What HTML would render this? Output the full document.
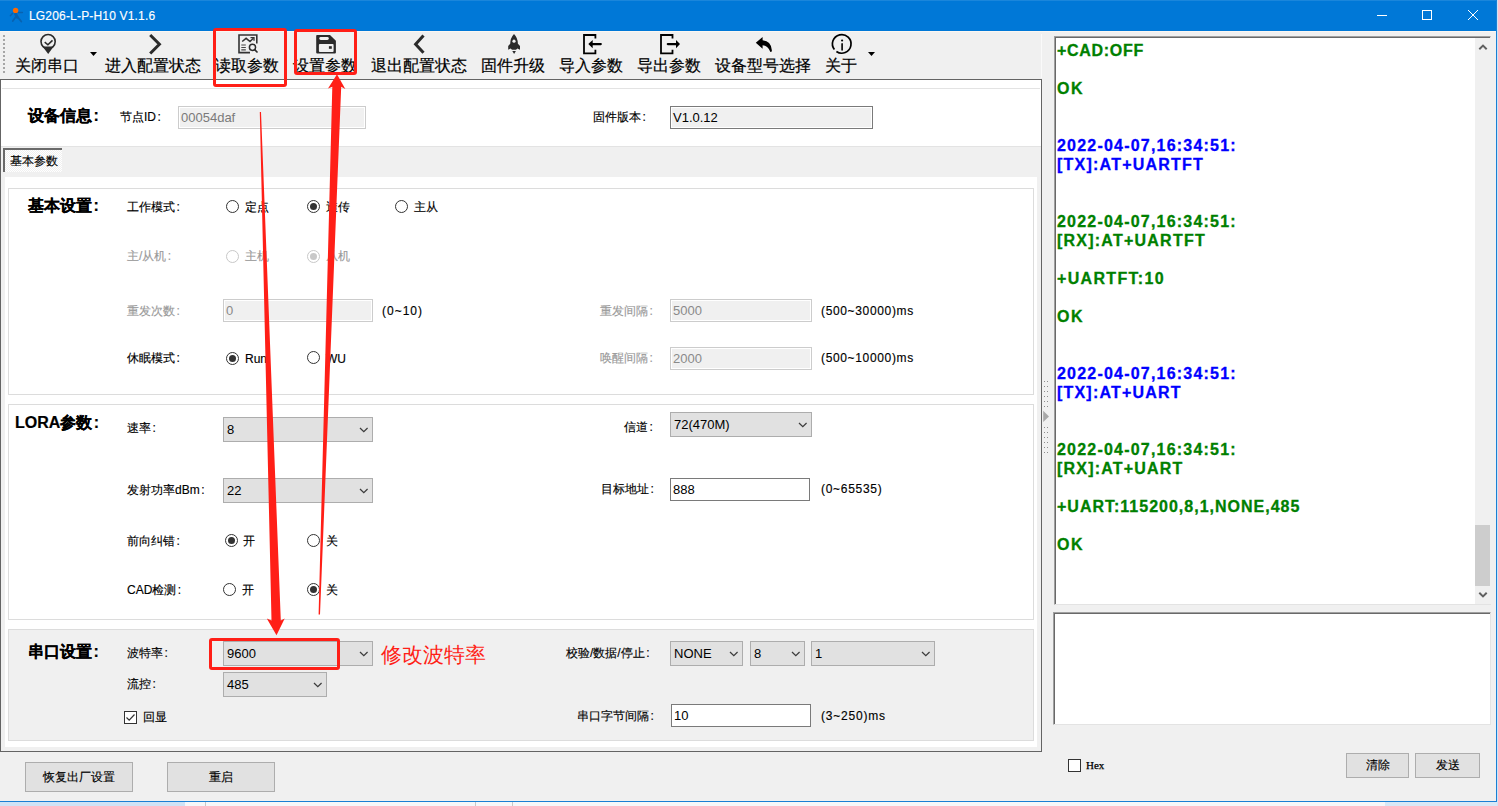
<!DOCTYPE html>
<html><head><meta charset="utf-8">
<style>
*{box-sizing:border-box;margin:0;padding:0}
html,body{width:1498px;height:806px;overflow:hidden}
body{position:relative;background:#f0f0f0;font-family:"Liberation Sans",sans-serif;color:#000}
.a{position:absolute}
.t{position:absolute;white-space:nowrap;font-size:12px;line-height:16px;-webkit-text-stroke:0.15px currentColor}
.tb{position:absolute;white-space:nowrap;font-size:16px;line-height:20px;color:#000;-webkit-text-stroke:0.2px currentColor}
.g{color:#9a9a9a}
.grp{position:absolute;border:1px solid #dcdcdc}
.combo{position:absolute;background:#e1e1e1;border:1px solid #adadad}
.combo span{position:absolute;left:3px;top:50%;transform:translateY(-50%);font-size:13px;line-height:16px}
.combo svg{position:absolute;right:4px;top:50%;margin-top:-3px}
.txd{position:absolute;background:#f0f0f0;border:1px solid #cccccc;box-shadow:inset 0 0 0 1px #fff}
.txd span,.txe span{position:absolute;left:2px;top:50%;transform:translateY(-50%);font-size:13px;line-height:16px}
.txd span{color:#8a8a8a}
.txe{position:absolute;background:#fff;border:1px solid #7a7a7a}
.rad{position:absolute;width:13px;height:13px;border-radius:50%;border:1px solid #333;background:#fff}
.rad.on::after{content:"";position:absolute;left:2px;top:2px;width:7px;height:7px;border-radius:50%;background:#333}
.rad.dis{border-color:#c8c8c8}
.rad.dis.on::after{background:#c8c8c8}
.btn{position:absolute;background:#e1e1e1;border:1px solid #adadad;font-size:12px;text-align:center;-webkit-text-stroke:0.15px #000}
.log{position:absolute;font-weight:bold;font-size:16px;line-height:19px;white-space:pre;-webkit-text-stroke:0.3px currentColor}
.G{color:#008000}.B{color:#0000ff}
.red{position:absolute;border:3px solid #ff1f17;border-radius:3px}
</style></head><body>

<!-- title bar -->
<div class="a" style="left:0;top:0;width:1496px;height:31px;background:#0078d7"></div>
<div class="a" style="left:0;top:0;width:1496px;height:1px;background:#1a86db"></div>
<svg class="a" style="left:6px;top:4px" width="22" height="22" viewBox="0 0 22 22">
 <g stroke="#0862b0" stroke-linecap="round" fill="none">
  <path d="M6.6 9.3 L4.4 11.7" stroke-width="1.6"/><path d="M12.3 8.5 H16.4" stroke-width="1.4"/>
  <path d="M9.6 10 L11.2 13.2" stroke-width="3"/>
  <path d="M9.5 13.2 L6.8 17" stroke-width="1.8"/><path d="M11.7 13.2 L15.3 17.5" stroke-width="1.8"/>
 </g>
 <circle cx="9.6" cy="6.4" r="2.7" fill="#ff6a00"/>
</svg>
<div class="t" style="left:29px;top:8px;color:#fff;font-size:12px;letter-spacing:0.18px">LG206-L-P-H10 V1.1.6</div>
<div class="a" style="left:1377px;top:15px;width:10px;height:1px;background:#fff"></div>
<div class="a" style="left:1422px;top:10px;width:10px;height:10px;border:1px solid #fff"></div>
<svg class="a" style="left:1467px;top:9px" width="12" height="12" viewBox="0 0 12 12"><path d="M1 1 L11 11 M11 1 L1 11" stroke="#fff" stroke-width="1"/></svg>

<!-- window borders -->
<div class="a" style="left:1496px;top:0;width:1px;height:802px;background:#1a7fd4"></div>
<div class="a" style="left:0;top:801px;width:1497px;height:1px;background:#1a7fd4"></div>
<div class="a" style="left:0;top:802px;width:1498px;height:4px;background:#f6f7f9"></div>
<div class="a" style="left:1385px;top:802px;width:113px;height:4px;background:#d8e8f6"></div>
<div class="a" style="left:205px;top:802px;width:1px;height:4px;background:#c8c8c8"></div><div class="a" style="left:475px;top:802px;width:1px;height:4px;background:#c8c8c8"></div><div class="a" style="left:512px;top:802px;width:1px;height:4px;background:#c8c8c8"></div>
<div class="a" style="left:0;top:802px;width:185px;height:4px;background:#cfe3f6"></div>
<div class="a" style="left:1497px;top:0;width:1px;height:806px;background:#cfe3f6"></div>

<!-- toolbar -->
<div class="a" style="left:0;top:31px;width:1496px;height:1px;background:#fbf7f2"></div>
<div id="grip" class="a" style="left:3px;top:35px;width:3px;height:40px;background:repeating-linear-gradient(#a6a6a6 0 2px,transparent 2px 4px);clip-path:inset(0 1px 0 0)"></div>
<div class="a" style="left:1041px;top:34px;width:1px;height:44px;background:#fafafa"></div>

<!-- toolbar labels -->
<div class="tb" style="left:15px;top:56px">关闭串口</div>
<div class="tb" style="left:105px;top:56px">进入配置状态</div>
<div class="tb" style="left:215px;top:56px">读取参数</div>
<div class="tb" style="left:293px;top:56px">设置参数</div>
<div class="tb" style="left:371px;top:56px">退出配置状态</div>
<div class="tb" style="left:481px;top:56px">固件升级</div>
<div class="tb" style="left:559px;top:56px">导入参数</div>
<div class="tb" style="left:637px;top:56px">导出参数</div>
<div class="tb" style="left:715px;top:56px">设备型号选择</div>
<div class="tb" style="left:825px;top:56px">关于</div>
<svg class="a" style="left:90px;top:52px" width="8" height="5"><path d="M0 0 H7 L3.5 4Z" fill="#000"/></svg>
<svg class="a" style="left:868px;top:52px" width="8" height="5"><path d="M0 0 H7 L3.5 4Z" fill="#000"/></svg>

<!-- toolbar icons -->
<svg class="a" style="left:36px;top:31px" width="26" height="26" viewBox="0 0 26 26">
 <circle cx="12.1" cy="10.6" r="7.1" fill="none" stroke="#2b2b2b" stroke-width="1.6"/>
 <path d="M6.6 15.5 L17.6 15.5 L12.2 23Z" fill="#2b2b2b"/>
 <path d="M8.7 11.2 L11.9 13.8 L16.5 9.4" fill="none" stroke="#2b2b2b" stroke-width="1.6"/>
</svg>
<svg class="a" style="left:142px;top:31px" width="24" height="26" viewBox="0 0 24 26">
 <path d="M8.2 4 L17.4 13.2 L8.2 22.5" fill="none" stroke="#2b2b2b" stroke-width="3"/>
</svg>
<svg class="a" style="left:234px;top:31px" width="26" height="26" viewBox="0 0 26 26">
 <path d="M16 21.6 H5 V4 H22.8 V12.6" fill="none" stroke="#333" stroke-width="1.6"/>
 <path d="M8.2 10.5 L12.1 7.3 L16 10.5 L19.4 7.3" fill="none" stroke="#333" stroke-width="1.5"/>
 <path d="M16.5 6.6 H20 V9.8" fill="none" stroke="#333" stroke-width="1.3"/>
 <path d="M7.3 14 H11.8 M7.3 16.5 H11.8 M7.3 18.8 H11.8" stroke="#444" stroke-width="1.2"/>
 <circle cx="18.5" cy="16.3" r="3.1" fill="none" stroke="#2b2b2b" stroke-width="1.5"/>
 <path d="M20.7 18.6 L23.5 21.5" stroke="#2b2b2b" stroke-width="1.6"/>
</svg>
<svg class="a" style="left:312px;top:31px" width="26" height="26" viewBox="0 0 26 26">
 <path d="M5 4 H18 L23.9 9.8 V21.6 Q23.9 22.6 22.9 22.6 H5.2 Q4.2 22.6 4.2 21.6 V5 Q4.2 4 5 4Z" fill="#2b2b2b"/>
 <rect x="7.3" y="6" width="9.5" height="3" rx="1.4" fill="#f0f0f0"/>
 <rect x="6.9" y="12.9" width="14.7" height="8.1" rx="1" fill="#f0f0f0"/>
 <rect x="16.9" y="15.2" width="2.9" height="2.6" fill="#2b2b2b"/>
</svg>
<svg class="a" style="left:408px;top:31px" width="24" height="26" viewBox="0 0 24 26">
 <path d="M15.5 4.5 L7.6 13.2 L15.5 21.8" fill="none" stroke="#2b2b2b" stroke-width="3"/>
</svg>
<svg class="a" style="left:500px;top:31px" width="30" height="26" viewBox="0 0 30 26">
 <path d="M14 3 Q10.2 7 10.2 13 L10.2 12.8 L8.2 15 V18.7 L10.6 17.5 L12 18.8 H16 L17.4 17.5 L20 18.7 V15 L17.9 12.8 Q17.9 7 14 3Z" fill="#2b2b2b"/>
 <circle cx="14" cy="10.2" r="1.6" fill="#f0f0f0"/>
 <path d="M12.3 20 H15.9 L14.1 22.9Z" fill="#2b2b2b"/>
</svg>
<svg class="a" style="left:578px;top:31px" width="30" height="26" viewBox="0 0 30 26">
 <path d="M17.4 7.4 V4 H6 V22.3 H17.4 V18.8" fill="none" stroke="#000" stroke-width="1.8"/>
 <path d="M10.3 13.1 L14.7 9 V17.2Z" fill="#000"/>
 <path d="M14 13.1 H22.8" stroke="#000" stroke-width="2.2" stroke-linecap="round"/>
</svg>
<svg class="a" style="left:656px;top:31px" width="30" height="26" viewBox="0 0 30 26">
 <path d="M16.5 7.4 V4 H5 V22.3 H16.5 V18.8" fill="none" stroke="#000" stroke-width="1.8"/>
 <path d="M24 13.1 L20 9 V17.2Z" fill="#000"/>
 <path d="M11.8 13.1 H21" stroke="#000" stroke-width="2.2" stroke-linecap="round"/>
</svg>
<svg class="a" style="left:750px;top:31px" width="30" height="26" viewBox="0 0 30 26">
 <path d="M5.8 11.8 L12.6 6 V9.3 Q21.4 10 21.9 19.6 Q21.8 21.4 20.3 20.7 Q17.8 14.6 12.6 14.2 V17.7Z" fill="#000"/>
</svg>
<svg class="a" style="left:826px;top:32px" width="32" height="26" viewBox="0 0 32 26">
 <path d="M8.4 17.6 A9.3 9.3 0 1 1 10.4 19.5" fill="none" stroke="#000" stroke-width="1.7"/>
 <circle cx="16.1" cy="8.5" r="1.1" fill="#000"/>
 <path d="M16.1 11.9 V18" stroke="#000" stroke-width="1.6" stroke-linecap="round"/>
</svg>

<!-- left panel -->
<div class="a" style="left:0;top:79px;width:1042px;height:673px;border:1px solid #646464;background:#fff"></div>
<div class="a" style="left:2px;top:88px;width:1038px;height:1px;background:#e3e3e3"></div>
<div class="a" style="left:1px;top:146px;width:1040px;height:1px;background:#e3e3e3"></div>
<div class="a" style="left:1px;top:147px;width:1040px;height:604px;background:#f0f0f0"></div>
<!-- tab -->
<div class="a" style="left:3px;top:148px;width:59px;height:24px;border-top:2px solid #6a6a6a;border-left:2px solid #6a6a6a;background:repeating-conic-gradient(#f0f0f0 0 25%,#fff 0 50%) 0 0/2px 2px"></div>
<div class="t" style="left:10px;top:153px">基本参数</div>
<!-- tab content -->
<div class="a" style="left:5px;top:177px;width:1032px;height:570px;background:#fff"></div>

<!-- device info -->
<div class="tb" style="left:28px;top:106px;font-weight:bold">设备信息<span style="margin-left:1.5px">:</span></div>
<div class="t" style="left:120px;top:109px">节点ID<span style="margin-left:1.5px">:</span></div>
<div class="txd" style="left:178px;top:106px;width:188px;height:23px"><span style="color:#7a7a7a">00054daf</span></div>
<div class="t" style="left:593px;top:109px">固件版本<span style="margin-left:1.5px">:</span></div>
<div class="txd" style="left:670px;top:106px;width:203px;height:23px;border-color:#7a7a7a"><span style="color:#000">V1.0.12</span></div>

<!-- group 1 -->
<div class="grp" style="left:8px;top:188px;width:1026px;height:207px;background:#fff"></div>
<div class="tb" style="left:28px;top:196px;font-weight:bold">基本设置<span style="margin-left:1.5px">:</span></div>
<div class="t" style="left:127px;top:199px">工作模式<span style="margin-left:1.5px">:</span></div>
<div class="rad" style="left:226px;top:200px"></div><div class="t" style="left:245px;top:199px">定点</div>
<div class="rad on" style="left:307px;top:200px"></div><div class="t" style="left:326px;top:199px">透传</div>
<div class="rad" style="left:395px;top:200px"></div><div class="t" style="left:414px;top:199px">主从</div>

<div class="t g" style="left:127px;top:248px">主/从机<span style="margin-left:1.5px">:</span></div>
<div class="rad dis" style="left:226px;top:250px"></div><div class="t g" style="left:245px;top:248px">主机</div>
<div class="rad dis on" style="left:307px;top:250px"></div><div class="t g" style="left:326px;top:248px">从机</div>

<div class="t g" style="left:127px;top:303px">重发次数<span style="margin-left:1.5px">:</span></div>
<div class="txd" style="left:223px;top:299px;width:150px;height:23px"><span>0</span></div>
<div class="t" style="left:382px;top:303px;letter-spacing:1.0px">(0~10)</div>
<div class="t g" style="left:600px;top:303px">重发间隔<span style="margin-left:1.5px">:</span></div>
<div class="txd" style="left:670px;top:299px;width:142px;height:23px"><span>5000</span></div>
<div class="t" style="left:821px;top:303px;letter-spacing:0.65px">(500~30000)ms</div>

<div class="t" style="left:127px;top:350px">休眠模式<span style="margin-left:1.5px">:</span></div>
<div class="rad on" style="left:226px;top:352px"></div><div class="t" style="left:245px;top:351px">Run</div>
<div class="rad" style="left:307px;top:351px"></div><div class="t" style="left:326px;top:351px">WU</div>
<div class="t g" style="left:600px;top:350px">唤醒间隔<span style="margin-left:1.5px">:</span></div>
<div class="txd" style="left:670px;top:347px;width:142px;height:23px"><span>2000</span></div>
<div class="t" style="left:821px;top:350px;letter-spacing:0.65px">(500~10000)ms</div>

<!-- group 2 LORA -->
<div class="grp" style="left:8px;top:404px;width:1026px;height:216px;background:#fff"></div>
<div class="tb" style="left:15px;top:413px;font-weight:bold">LORA参数<span style="margin-left:1.5px">:</span></div>
<div class="t" style="left:127px;top:420px">速率<span style="margin-left:1.5px">:</span></div>
<div class="combo" style="left:223px;top:417px;width:150px;height:25px"><span>8</span><svg width="10" height="6"><path d="M2 1 L5.8 4.6 L9.6 1" fill="none" stroke="#3c3c3c" stroke-width="1.3"/></svg></div>
<div class="t" style="left:624px;top:419px">信道<span style="margin-left:1.5px">:</span></div>
<div class="combo" style="left:670px;top:412px;width:142px;height:25px"><span>72(470M)</span><svg width="10" height="6"><path d="M2 1 L5.8 4.6 L9.6 1" fill="none" stroke="#3c3c3c" stroke-width="1.3"/></svg></div>

<div class="t" style="left:127px;top:482px">发射功率dBm<span style="margin-left:1.5px">:</span></div>
<div class="combo" style="left:223px;top:478px;width:150px;height:25px"><span>22</span><svg width="10" height="6"><path d="M2 1 L5.8 4.6 L9.6 1" fill="none" stroke="#3c3c3c" stroke-width="1.3"/></svg></div>
<div class="t" style="left:601px;top:481px">目标地址<span style="margin-left:1.5px">:</span></div>
<div class="txe" style="left:670px;top:478px;width:140px;height:23px"><span>888</span></div>
<div class="t" style="left:821px;top:481px;letter-spacing:0.7px">(0~65535)</div>

<div class="t" style="left:127px;top:533px">前向纠错<span style="margin-left:1.5px">:</span></div>
<div class="rad on" style="left:225px;top:534px"></div><div class="t" style="left:243px;top:533px">开</div>
<div class="rad" style="left:307px;top:534px"></div><div class="t" style="left:326px;top:533px">关</div>

<div class="t" style="left:127px;top:582px">CAD检测<span style="margin-left:1.5px">:</span></div>
<div class="rad" style="left:223px;top:583px"></div><div class="t" style="left:242px;top:582px">开</div>
<div class="rad on" style="left:307px;top:583px"></div><div class="t" style="left:326px;top:582px">关</div>

<!-- group 3 serial -->
<div class="grp" style="left:8px;top:629px;width:1026px;height:112px;background:#f0f0f0"></div>
<div class="tb" style="left:28px;top:642px;font-weight:bold">串口设置<span style="margin-left:1.5px">:</span></div>
<div class="t" style="left:127px;top:645px">波特率<span style="margin-left:1.5px">:</span></div>
<div class="combo" style="left:223px;top:641px;width:150px;height:25px"><span>9600</span><svg width="10" height="6"><path d="M2 1 L5.8 4.6 L9.6 1" fill="none" stroke="#3c3c3c" stroke-width="1.3"/></svg></div>
<div class="t" style="left:127px;top:676px">流控<span style="margin-left:1.5px">:</span></div>
<div class="combo" style="left:223px;top:672px;width:104px;height:25px"><span>485</span><svg width="10" height="6"><path d="M2 1 L5.8 4.6 L9.6 1" fill="none" stroke="#3c3c3c" stroke-width="1.3"/></svg></div>
<div class="a" style="left:124px;top:711px;width:13px;height:13px;border:1px solid #333;background:#fff"></div>
<svg class="a" style="left:124px;top:711px" width="13" height="13"><path d="M2.5 6.5 L5.2 9.2 L10.5 3.5" fill="none" stroke="#333" stroke-width="1.2"/></svg>
<div class="t" style="left:143px;top:709px">回显</div>

<div class="t" style="left:566px;top:645px">校验/数据/停止<span style="margin-left:1.5px">:</span></div>
<div class="combo" style="left:670px;top:641px;width:73px;height:25px"><span>NONE</span><svg width="10" height="6"><path d="M2 1 L5.8 4.6 L9.6 1" fill="none" stroke="#3c3c3c" stroke-width="1.3"/></svg></div>
<div class="combo" style="left:750px;top:641px;width:55px;height:25px"><span>8</span><svg width="10" height="6"><path d="M2 1 L5.8 4.6 L9.6 1" fill="none" stroke="#3c3c3c" stroke-width="1.3"/></svg></div>
<div class="combo" style="left:811px;top:641px;width:124px;height:25px"><span>1</span><svg width="10" height="6"><path d="M2 1 L5.8 4.6 L9.6 1" fill="none" stroke="#3c3c3c" stroke-width="1.3"/></svg></div>
<div class="t" style="left:577px;top:708px">串口字节间隔<span style="margin-left:1.5px">:</span></div>
<div class="txe" style="left:671px;top:704px;width:140px;height:23px"><span>10</span></div>
<div class="t" style="left:821px;top:708px;letter-spacing:0.8px">(3~250)ms</div>

<!-- bottom buttons -->
<div class="btn" style="left:25px;top:762px;width:108px;height:30px;line-height:28px">恢复出厂设置</div>
<div class="btn" style="left:167px;top:762px;width:108px;height:30px;line-height:28px">重启</div>

<!-- splitter -->
<svg class="a" style="left:1042px;top:379px" width="12" height="76" viewBox="0 0 12 76"><g fill="#8c8c8c"><rect x="2" y="2" width="1" height="1"/><rect x="5" y="2" width="1" height="1"/><rect x="2" y="7" width="1" height="1"/><rect x="5" y="7" width="1" height="1"/><rect x="2" y="12" width="1" height="1"/><rect x="5" y="12" width="1" height="1"/><rect x="2" y="17" width="1" height="1"/><rect x="5" y="17" width="1" height="1"/><rect x="2" y="22" width="1" height="1"/><rect x="5" y="22" width="1" height="1"/><rect x="2" y="27" width="1" height="1"/><rect x="5" y="27" width="1" height="1"/><rect x="2" y="48" width="1" height="1"/><rect x="5" y="48" width="1" height="1"/><rect x="2" y="53" width="1" height="1"/><rect x="5" y="53" width="1" height="1"/><rect x="2" y="58" width="1" height="1"/><rect x="5" y="58" width="1" height="1"/><rect x="2" y="63" width="1" height="1"/><rect x="5" y="63" width="1" height="1"/><rect x="2" y="68" width="1" height="1"/><rect x="5" y="68" width="1" height="1"/><rect x="2" y="73" width="1" height="1"/><rect x="5" y="73" width="1" height="1"/></g><path d="M1.2 31.8 L7 37.4 L1.2 43Z" fill="#a8a8a8"/></svg>
<!-- right log -->
<div class="a" style="left:1054px;top:36px;width:437px;height:569px;background:#fff;border-top:1px solid #a0a0a0;border-left:1px solid #a0a0a0;border-right:1px solid #e3e3e3;border-bottom:1px solid #e3e3e3;box-shadow:inset 1px 1px 0 #696969"></div>
<div class="a" style="left:1475px;top:38px;width:16px;height:566px;background:#f0f0f0"></div>
<svg class="a" style="left:1477px;top:43px" width="12" height="8"><path d="M2.3 6.2 L6 2.6 L9.7 6.2" fill="none" stroke="#606060" stroke-width="2"/></svg>
<svg class="a" style="left:1477px;top:591px" width="12" height="8"><path d="M2.3 1.8 L6 5.4 L9.7 1.8" fill="none" stroke="#606060" stroke-width="2"/></svg>
<div class="a" style="left:1475px;top:525px;width:15px;height:61px;background:#cdcdcd"></div>

<div class="log" style="left:1057px;top:41px"><span class="G" style="letter-spacing:0.7px">+CAD:OFF</span>

<span class="G" style="letter-spacing:1.5px">OK</span>


<span class="B" style="letter-spacing:1.21px">2022-04-07,16:34:51:</span>
<span class="B" style="letter-spacing:1.23px">[TX]:AT+UARTFT</span>


<span class="G" style="letter-spacing:1.21px">2022-04-07,16:34:51:</span>
<span class="G" style="letter-spacing:1.23px">[RX]:AT+UARTFT</span>

<span class="G" style="letter-spacing:1.33px">+UARTFT:10</span>

<span class="G" style="letter-spacing:1.5px">OK</span>


<span class="B" style="letter-spacing:1.21px">2022-04-07,16:34:51:</span>
<span class="B" style="letter-spacing:1.2px">[TX]:AT+UART</span>


<span class="G" style="letter-spacing:1.21px">2022-04-07,16:34:51:</span>
<span class="G" style="letter-spacing:1.2px">[RX]:AT+UART</span>

<span class="G" style="letter-spacing:1.0px">+UART:115200,8,1,NONE,485</span>

<span class="G" style="letter-spacing:1.5px">OK</span></div>

<!-- input box -->
<div class="a" style="left:1053px;top:612px;width:438px;height:113px;background:#fff;border-top:1px solid #a0a0a0;border-left:1px solid #a0a0a0;border-right:1px solid #e3e3e3;border-bottom:1px solid #e3e3e3;box-shadow:inset 1px 1px 0 #696969"></div>
<div class="a" style="left:1068px;top:759px;width:13px;height:13px;border:1px solid #333;background:#fff"></div>
<div class="a" style="left:1086px;top:758px;font-family:'Liberation Serif',serif;font-size:11px;line-height:14px;-webkit-text-stroke:0.25px #000">Hex</div>
<div class="btn" style="left:1346px;top:753px;width:63px;height:25px;line-height:23px">清除</div>
<div class="btn" style="left:1415px;top:753px;width:65px;height:25px;line-height:23px">发送</div>

<!-- annotations -->
<div class="red" style="left:213px;top:28px;width:74px;height:59px"></div>
<div class="red" style="left:294px;top:29px;width:63px;height:46px"></div>
<div class="red" style="left:209px;top:638px;width:131px;height:32px"></div>
<div class="a" style="left:381px;top:641px;font-size:21px;line-height:28px;color:#ff1f17;white-space:nowrap">修改波特率</div>
<svg class="a" style="left:0;top:0" width="1498" height="806" viewBox="0 0 1498 806">
 <path d="M259.8 112 L261 112 L280.8 620.6 L284.7 618.6 L276.5 635.3 L266.8 618.4 L271.5 620.6Z" fill="#ff1f17"/>
 <path d="M337 74.3 L345.3 89 L341.2 86.8 L320 614.4 L318.6 614.4 L332.3 86.8 L328 88.4Z" fill="#ff1f17"/>
</svg>
</body></html>
